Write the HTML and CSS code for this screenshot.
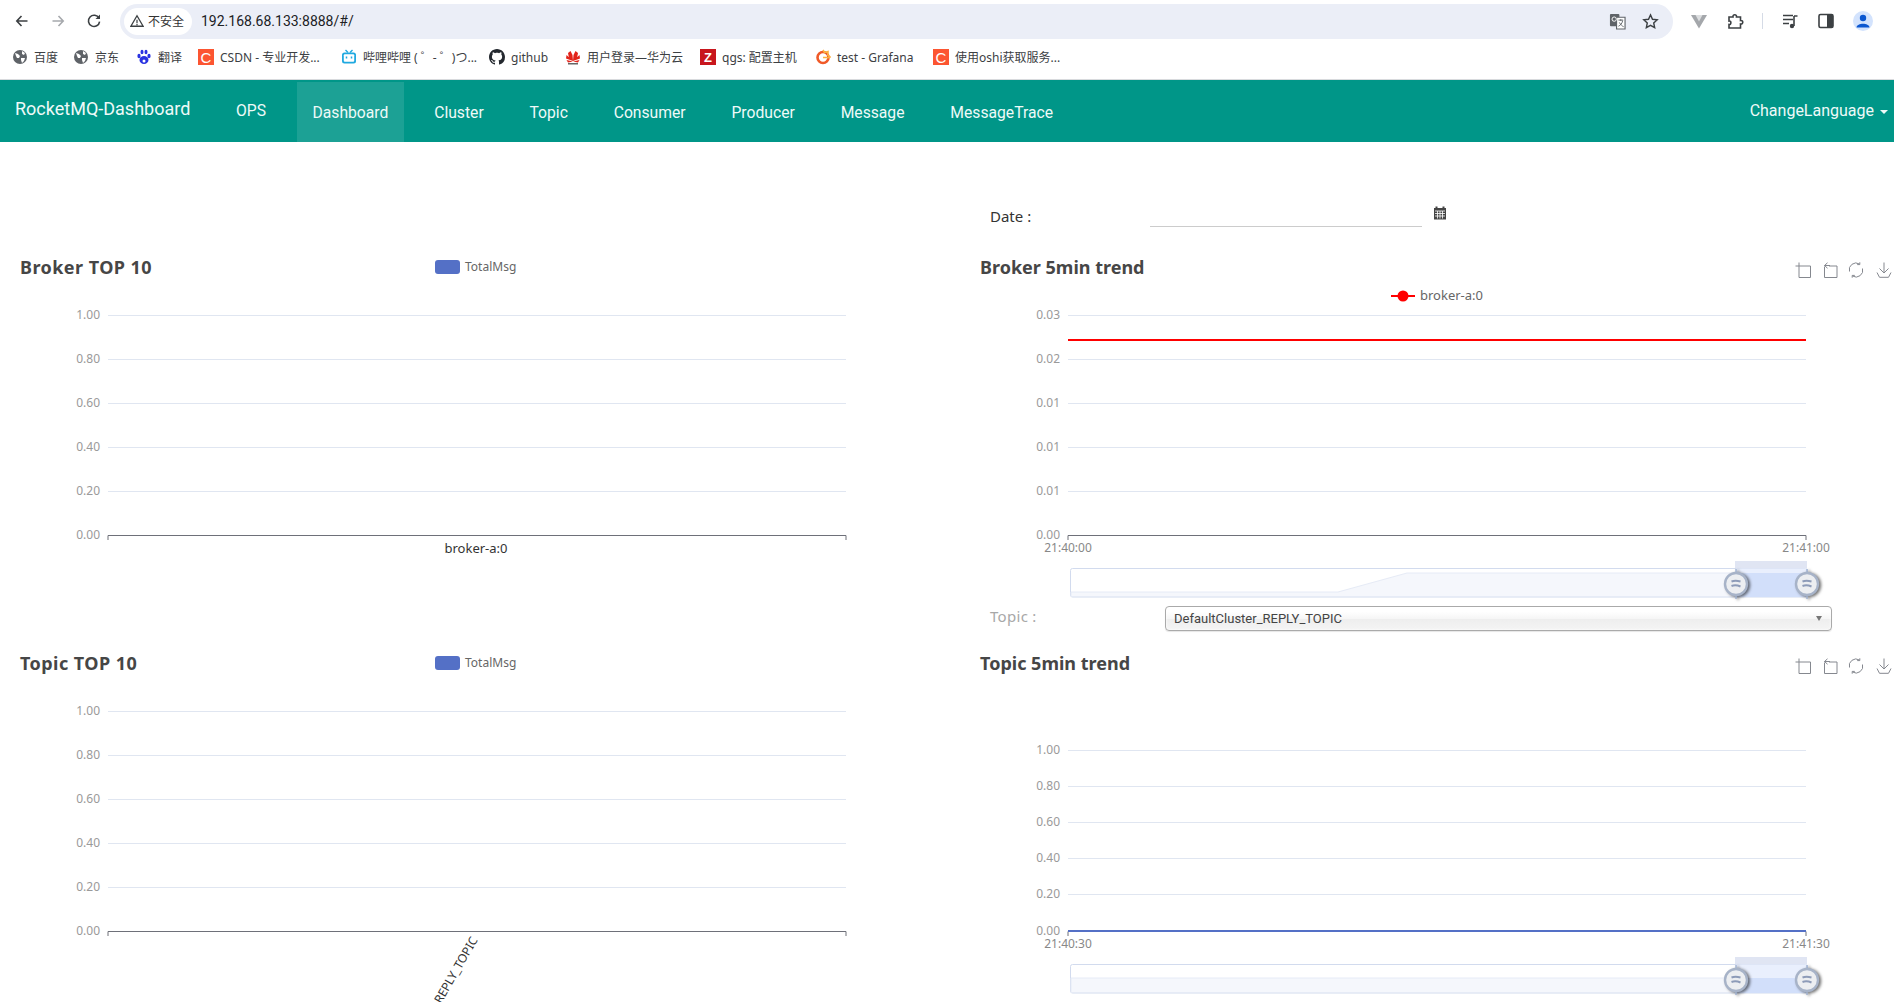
FILE: index.html
```html
<!DOCTYPE html>
<html lang="zh">
<head>
<meta charset="utf-8">
<title>RocketMQ-Dashboard</title>
<link rel="stylesheet" href="styles.css">
</head>
<body>
<svg class="defs" width="0" height="0" aria-hidden="true">
  <defs>
    <symbol id="globe" viewBox="0 0 16 16"><circle cx="8" cy="8" r="7" fill="#5f6368"/><path d="M3 4l3 1 2 2-1 2-2 0-1-2zM10 2l3 2-1 2-2-1zM9 9l4 0-1 3-2 2-1-3z" fill="#fff"/></symbol>
    <symbol id="tb-zoom" viewBox="0 0 16 16"><path d="M4 0.500V15.500H15.500V4H0.500" fill="none" stroke="#85888f" stroke-width="1"/></symbol>
    <symbol id="tb-back" viewBox="0 0 16 16"><path d="M7 4H15V15.500H2.500V4.500M2.500 3.500H8M5.500 0.800L2.500 3.500L5.500 6.200" fill="none" stroke="#85888f" stroke-width="1"/></symbol>
    <symbol id="tb-refresh" viewBox="0 0 16 16"><path d="M1.500 9.500A6.700 6.700 0 0 1 11.500 2M14.500 6.500A6.700 6.700 0 0 1 4.500 14M11.800 0.300V2.600H9.200M4.200 15.700V13.400H6.800" fill="none" stroke="#85888f" stroke-width="1"/></symbol>
    <symbol id="tb-save" viewBox="0 0 16 16"><path d="M8 0.500V10.500M3.500 6.500L8 11L12.500 6.500M1 10.500L3.500 15.300H12.500L15 10.500" fill="none" stroke="#85888f" stroke-width="1"/></symbol>
    <symbol id="handle" viewBox="0 0 26 30" overflow="visible"><path d="M13 0V4M13 26V30" stroke="#9db0d0" stroke-width="1.400"/><circle cx="13" cy="15" r="11" fill="#eceef1" stroke="#a7b3c8" stroke-width="2.400"/><path d="M8.500 12.500C11 11.500 14 11.500 17.500 12.500M8.500 17C11 16 14 16 17.500 17.500" fill="none" stroke="#8d9bb8" stroke-width="2"/></symbol>
  </defs>
</svg>

<header class="chrome">
  <div class="toolbar">
    <svg class="tool-ic" viewBox="0 0 16 16"><path d="M13.500 8H3M7.500 3L2.800 8l4.700 5" fill="none" stroke="#3c4043" stroke-width="1.600"/></svg>
    <svg class="tool-ic" viewBox="0 0 16 16"><path d="M2.500 8H13M8.500 3l4.700 5-4.700 5" fill="none" stroke="#a6a9ad" stroke-width="1.600"/></svg>
    <svg class="tool-ic" viewBox="0 0 16 16"><path d="M13 5.200A5.600 5.600 0 1 0 13.600 8.600" fill="none" stroke="#3c4043" stroke-width="1.600"/><path d="M14 1.500V6H9.500z" fill="#3c4043"/></svg>
    <div class="omnibox">
      <div class="secure">
        <svg class="warn" viewBox="0 0 16 16"><path d="M8 2L15 14H1z" fill="none" stroke="#3c4043" stroke-width="1.500"/><path d="M8 6.500V10.500M8 11.500V13" stroke="#3c4043" stroke-width="1.400"/></svg>
        <span>不安全</span>
      </div>
      <span class="url">192.168.68.133:8888/#/</span>
      <svg class="omni-ic translate" viewBox="0 0 18 18"><rect x="1" y="1" width="10" height="13" rx="1" fill="#5f6368"/><path d="M8 4.500H17V17H8z" fill="#fff" stroke="#5f6368" stroke-width="1.200"/><path d="M10 7.500H15M12.500 6.500V8.500M14.500 8C14 11 12 13 10 14M11 10C12 12 14 14 15.500 14.500" fill="none" stroke="#5f6368"/><circle cx="5.500" cy="6.500" r="2.300" fill="none" stroke="#fff"/></svg>
      <svg class="omni-ic" viewBox="0 0 18 18"><path d="M9 2l2.100 4.600 5 .6-3.700 3.400 1 5L9 13.100l-4.400 2.500 1-5L1.900 7.200l5-.6z" fill="none" stroke="#3c4043" stroke-width="1.500"/></svg>
    </div>
    <div class="ext">
      <svg class="ext-ic" viewBox="0 0 18 18"><path d="M1 3H17L9 16.500z" fill="#a4a7ab"/><path d="M5.500 3H12.500L9 9.500z" fill="#dcdee0"/></svg>
      <svg class="ext-ic" viewBox="0 0 18 18"><path d="M3 5H7C6.500 2 11 2 10.500 5H14.500V8.500C17.500 8 17.500 12.500 14.500 12V16H3V12.500C5.500 13 5.500 8.500 3 9z" fill="none" stroke="#3c4043" stroke-width="1.600"/></svg>
      <span class="ext-sep"></span>
      <svg class="ext-ic" viewBox="0 0 18 18"><path d="M2 3.500H12M2 7.500H12M2 11.500H8" stroke="#3c4043" stroke-width="1.600"/><path d="M13 4V14M13 4H16.500" fill="none" stroke="#3c4043" stroke-width="1.600"/><circle cx="11" cy="14" r="2.200" fill="#3c4043"/></svg>
      <svg class="ext-ic" viewBox="0 0 18 18"><rect x="2" y="2.500" width="14" height="13" rx="1.500" fill="#fff" stroke="#3c4043" stroke-width="1.600"/><rect x="10" y="2.500" width="6" height="13" fill="#3c4043"/></svg>
      <svg class="avatar" viewBox="0 0 20 20"><circle cx="10" cy="10" r="10" fill="#d3e3fd"/><circle cx="10" cy="7" r="3.200" fill="#0b57d0"/><path d="M3.500 16.500C4 11.500 16 11.500 16.500 16.500z" fill="#0b57d0"/></svg>
    </div>
  </div>
  <nav class="bookmarks">
    <a class="bm bm-1"><svg class="bm-ic"><use href="#globe"/></svg>百度</a>
    <a class="bm bm-2"><svg class="bm-ic"><use href="#globe"/></svg>京东</a>
    <a class="bm bm-3"><svg class="bm-ic" viewBox="0 0 16 16"><ellipse cx="8" cy="11" rx="4.500" ry="4" fill="#2932e1"/><ellipse cx="3" cy="7" rx="1.600" ry="2.200" fill="#2932e1"/><ellipse cx="13" cy="7" rx="1.600" ry="2.200" fill="#2932e1"/><ellipse cx="6" cy="3" rx="1.500" ry="2.200" fill="#2932e1"/><ellipse cx="10" cy="3" rx="1.500" ry="2.200" fill="#2932e1"/><circle cx="8" cy="12" r="1.500" fill="#fff"/></svg>翻译</a>
    <a class="bm bm-4"><span class="bm-c">C</span>CSDN - 专业开发...</a>
    <a class="bm bm-5"><svg class="bm-ic" viewBox="0 0 16 16"><path d="M4.500 1L7 3.500M11.500 1L9 3.500" stroke="#20a9e0" stroke-width="1.400"/><rect x="1" y="3.500" width="14" height="11" rx="2.500" fill="#20a9e0"/><rect x="2.800" y="5.300" width="10.400" height="7.400" rx="1" fill="#fff"/><path d="M5.500 7.500V9.500M10.500 7.500V9.500" stroke="#20a9e0" stroke-width="1.500"/></svg>哔哩哔哩 ( ゜- ゜)つ...</a>
    <a class="bm bm-6"><svg class="bm-ic" viewBox="0 0 16 16"><path fill="#24292f" d="M8 0C3.580 0 0 3.580 0 8c0 3.540 2.290 6.530 5.470 7.590.4.070.55-.17.55-.38 0-.19-.01-.82-.01-1.490-2.010.37-2.530-.49-2.690-.94-.09-.23-.48-.94-.82-1.130-.28-.15-.68-.52-.01-.53.63-.01 1.080.58 1.230.82.72 1.210 1.870.87 2.330.66.07-.52.28-.87.51-1.070-1.780-.2-3.640-.89-3.640-3.950 0-.87.310-1.590.820-2.150-.080-.2-.36-1.020.08-2.120 0 0 .67-.21 2.200.82.640-.18 1.320-.27 2-.27s1.360.09 2 .27c1.530-1.040 2.200-.82 2.200-.82.440 1.100.160 1.920.080 2.120.510.560.820 1.270.820 2.150 0 3.070-1.870 3.750-3.650 3.950.290.250.540.730.540 1.480 0 1.070-.010 1.930-.010 2.200 0 .210.150.460.550.380A8.010 8.010 0 0 0 16 8c0-4.420-3.580-8-8-8z"/></svg>github</a>
    <a class="bm bm-7"><svg class="bm-ic" viewBox="0 0 16 16"><path d="M8 12L4 9 3 4 5.500 2 7.500 6zM8 12l4-3 1-5-2.500-2L8.500 6zM8 12L1 9.500 1.500 6zM8 12l7-2.500L14.500 6zM8 12.500L3 13.500 1.500 11zM8 12.500l5 1 1.500-2.500z" fill="#e2231a"/><rect x="3" y="14" width="10" height="1.500" fill="#666"/></svg>用户登录—华为云</a>
    <a class="bm bm-8"><span class="bm-z">Z</span>qgs: 配置主机</a>
    <a class="bm bm-9"><svg class="bm-ic" viewBox="0 0 16 16"><circle cx="8" cy="8.500" r="5.500" fill="none" stroke="#f05a28" stroke-width="2.600"/><path d="M8 1L9.500 3.500 13 2.500 12.800 6 15 8 12 9M8 8.500h4" fill="none" stroke="#fbb040" stroke-width="1.600"/></svg>test - Grafana</a>
    <a class="bm bm-10"><span class="bm-c">C</span>使用oshi获取服务...</a>
  </nav>
</header>

<nav class="appbar">
  <a class="brand">RocketMQ-Dashboard</a>
  <a class="ops">OPS</a>
  <ul class="menu">
    <li class="item active">Dashboard</li>
    <li class="item">Cluster</li>
    <li class="item">Topic</li>
    <li class="item">Consumer</li>
    <li class="item">Producer</li>
    <li class="item">Message</li>
    <li class="item">MessageTrace</li>
  </ul>
  <a class="lang">ChangeLanguage<span class="caret"></span></a>
</nav>

<main class="board">
  <section class="col-left">
    <svg class="chart chart-tall" viewBox="0 0 960 396">
      <text class="title title-wide" x="20" y="34">Broker TOP 10</text>
      <rect class="legend-bar" x="435" y="20" width="25" height="14" rx="3"/>
      <text class="legend" x="465" y="31">TotalMsg</text>
      <path class="grid" d="M108 75.500H846M108 119.500H846M108 163.500H846M108 207.500H846M108 251.500H846"/>
      <path class="axis" d="M108 300V295.500H846V300"/>
      <g class="ylab"><text x="100" y="79">1.00</text><text x="100" y="123">0.80</text><text x="100" y="167">0.60</text><text x="100" y="211">0.40</text><text x="100" y="255">0.20</text><text x="100" y="299">0.00</text></g>
      <text class="xcat" x="476" y="313">broker-a:0</text>
    </svg>
    <svg class="chart chart-tall" viewBox="0 0 960 396">
      <text class="title title-wide" x="20" y="34">Topic TOP 10</text>
      <rect class="legend-bar" x="435" y="20" width="25" height="14" rx="3"/>
      <text class="legend" x="465" y="31">TotalMsg</text>
      <path class="grid" d="M108 75.500H846M108 119.500H846M108 163.500H846M108 207.500H846M108 251.500H846"/>
      <path class="axis" d="M108 300V295.500H846V300"/>
      <g class="ylab"><text x="100" y="79">1.00</text><text x="100" y="123">0.80</text><text x="100" y="167">0.60</text><text x="100" y="211">0.40</text><text x="100" y="255">0.20</text><text x="100" y="299">0.00</text></g>
      <text class="xrot" transform="translate(478 304) rotate(-60)">DefaultCluster_REPLY_TOPIC</text>
    </svg>
  </section>

  <section class="col-right">
    <div class="date-row">
      <label class="date-label">Date :</label>
      <div class="date-input"></div>
      <svg class="cal" viewBox="0 0 14 14"><path d="M1 2H13V13.500H1z" fill="#444"/><path d="M3.500 0.500V3M10.500 0.500V3" stroke="#444" stroke-width="2"/><path d="M2 5H12M2 7.500H12M2 10H12M4.500 5V12.500M7 5V12.500M9.500 5V12.500" stroke="#fff" stroke-width=".8"/></svg>
    </div>
    <svg class="chart chart-a" viewBox="0 0 934 360">
      <text class="title" x="20" y="34">Broker 5min trend</text>
      <use href="#tb-zoom" x="835" y="22" width="16" height="16"/>
      <use href="#tb-back" x="862" y="22" width="16" height="16"/>
      <use href="#tb-refresh" x="888" y="22" width="16" height="16"/>
      <use href="#tb-save" x="916" y="22" width="16" height="16"/>
      <path class="red" d="M431 56H455"/><circle class="red-dot" cx="443" cy="56" r="5.500"/>
      <text class="legend legend-lg" x="460" y="60">broker-a:0</text>
      <path class="grid" d="M108 75.500H846M108 119.500H846M108 163.500H846M108 207.500H846M108 251.500H846"/>
      <path class="red" d="M108 100H846"/>
      <path class="axis" d="M108 300V295.500H846V300"/>
      <g class="ylab"><text x="100" y="79">0.03</text><text x="100" y="123">0.02</text><text x="100" y="167">0.01</text><text x="100" y="211">0.01</text><text x="100" y="255">0.01</text><text x="100" y="299">0.00</text></g>
      <g class="xtime"><text x="108" y="312">21:40:00</text><text x="846" y="312">21:41:00</text></g>
      <rect class="dz-frame" x="110.500" y="328.500" width="737" height="28.500" rx="2"/>
      <path class="dz-area" d="M111 352H378L447 333H847V356.500H111z"/>
      <rect class="dz-tab" x="775" y="321" width="72" height="7"/>
      <rect class="dz-top" x="776" y="328.500" width="71" height="4.500"/>
      <rect class="dz-sel" x="776" y="333" width="71" height="24"/>
      <use href="#handle" x="763" y="329" width="26" height="30" class="dz-handle"/>
      <use href="#handle" x="834" y="329" width="26" height="30" class="dz-handle"/>
    </svg>
    <div class="topic-row">
      <label class="topic-label">Topic :</label>
      <div class="select"><span>DefaultCluster_REPLY_TOPIC</span><i class="select-arrow"></i></div>
    </div>
    <svg class="chart chart-b" viewBox="0 0 934 366">
      <text class="title" x="20" y="34">Topic 5min trend</text>
      <use href="#tb-zoom" x="835" y="22" width="16" height="16"/>
      <use href="#tb-back" x="862" y="22" width="16" height="16"/>
      <use href="#tb-refresh" x="888" y="22" width="16" height="16"/>
      <use href="#tb-save" x="916" y="22" width="16" height="16"/>
      <path class="grid" d="M108 114.500H846M108 150.500H846M108 186.500H846M108 222.500H846M108 258.500H846"/>
      <path class="axis" d="M108 300V295.500H846V300"/>
      <path class="blue" d="M108 295H846"/>
      <g class="ylab"><text x="100" y="118">1.00</text><text x="100" y="154">0.80</text><text x="100" y="190">0.60</text><text x="100" y="226">0.40</text><text x="100" y="262">0.20</text><text x="100" y="299">0.00</text></g>
      <g class="xtime"><text x="108" y="312">21:40:30</text><text x="846" y="312">21:41:30</text></g>
      <rect class="dz-frame" x="110.500" y="328.500" width="737" height="28.500" rx="2"/>
      <path class="dz-area" d="M111 342H847V356.500H111z"/>
      <rect class="dz-tab" x="775" y="321" width="72" height="7"/>
      <rect class="dz-top" x="776" y="328.500" width="71" height="13.500"/>
      <rect class="dz-sel" x="776" y="342" width="71" height="15"/>
      <use href="#handle" x="763" y="329" width="26" height="30" class="dz-handle"/>
      <use href="#handle" x="834" y="329" width="26" height="30" class="dz-handle"/>
    </svg>
  </section>
</main>
</body>
</html>
```

FILE: styles.css
```css
html, body { margin: 0; padding: 0; height: 1002px; overflow: hidden; background: #fff; }
body { font-family: "Noto Sans", "Noto Sans CJK SC", sans-serif; color: #333; width: 1894px; }
.defs { position: absolute; }

/* browser chrome */
.chrome { height: 79px; box-sizing: border-box; display: flex; flex-direction: column; }
.toolbar { height: 42px; display: flex; align-items: center; padding: 0 0 0 14px; box-sizing: border-box; flex: none; }
.tool-ic { width: 16px; height: 16px; margin-right: 20px; flex: none; }
.omnibox { width: 1553px; height: 35px; margin-left: -2px; background: #ebeef7; border-radius: 18px; display: flex; align-items: center; flex: none; box-sizing: border-box; padding: 0 14px 0 4px; }
.secure { display: flex; align-items: center; gap: 4px; height: 27px; padding: 0 4px 0 6px; background: #fff; border-radius: 14px; font-size: 12px; color: #333; width: 68px; box-sizing: border-box; flex: none; }
.warn { width: 14px; height: 14px; flex: none; }
.url { margin-left: 9px; font-family: "Roboto", sans-serif; font-size: 14px; color: #202124; flex: 1; }
.omni-ic { width: 17px; height: 17px; flex: none; margin-left: 16px; }
.ext { display: flex; align-items: center; margin-left: 17px; }
.ext-ic { width: 18px; height: 18px; flex: none; margin-right: 18px; }
.ext-sep { width: 1px; height: 16px; background: #d5dbe6; margin: 0 18px 0 0; }
.avatar { width: 20px; height: 20px; flex: none; }

.bookmarks { height: 30px; flex: none; display: flex; align-items: center; font-size: 12px; color: #3c4043; font-family: "Noto Sans", "Noto Sans CJK SC", sans-serif; }
.bm { display: flex; align-items: center; gap: 6px; flex: none; white-space: nowrap; box-sizing: border-box; }
.bm-1 { margin-left: 12px; width: 61px; }
.bm-2 { width: 63px; }
.bm-3 { width: 62px; }
.bm-4 { width: 143px; }
.bm-5 { width: 148px; }
.bm-6 { width: 76px; }
.bm-7 { width: 135px; }
.bm-8 { width: 115px; }
.bm-9 { width: 118px; }
.bm-ic { width: 16px; height: 16px; flex: none; }
.bm-c, .bm-z { width: 16px; height: 16px; flex: none; display: flex; align-items: center; justify-content: center; color: #fff; }
.bm-c { background: #fc5531; font-size: 15px; font-family: "Liberation Sans", sans-serif; }
.bm-z { background: #c8161d; font-weight: 700; font-size: 13px; font-family: "Liberation Sans", sans-serif; }

/* app bar */
.appbar { height: 63px; background: #009688; border-top: 1px solid #d8dadd; box-sizing: border-box; display: flex; color: #fff; font-family: "Roboto", sans-serif; font-size: 15.700px; }
.brand { font-size: 18px; padding: 17px 0 0 15px; width: 181px; flex: none; white-space: nowrap; line-height: 24px; color: #eefaf8; }
.ops { padding: 20px 0 0 0; margin-left: 40px; line-height: 22px; flex: none; color: #eefaf8; width: 61px; }
.menu { list-style: none; margin: 2px 0 0 0; padding: 0; display: flex; gap: 14.800px; flex: none; }
.item { padding: 0 15.500px; height: 60px; line-height: 62px; color: #eefaf8; }
.item.active { background: rgba(255, 255, 255, .11); }
.lang { margin-left: auto; padding: 20px 6px 0 0; line-height: 22px; font-size: 16px; white-space: nowrap; color: #eefaf8; }
.caret { display: inline-block; border: 4px solid transparent; border-top-color: #eefaf8; border-bottom: 0; margin-left: 6px; vertical-align: middle; }

/* board */
.board { display: flex; align-items: flex-start; }
.col-left { width: 960px; padding-top: 98px; flex: none; }
.col-right { width: 934px; flex: none; }
.chart { display: block; overflow: visible; }
.chart-tall { width: 960px; height: 396px; }
.chart-a { width: 934px; height: 360px; }
.chart-b { width: 934px; height: 366px; }

.date-row { height: 98px; display: flex; align-items: flex-start; box-sizing: border-box; padding: 63px 0 0 30px; }
.date-label { font-size: 15px; width: 160px; line-height: 22px; color: #333; flex: none; }
.date-input { width: 272px; height: 21px; border-bottom: 1px solid #ccc; flex: none; }
.cal { width: 14px; height: 14px; margin: 1px 0 0 11px; flex: none; }

.topic-row { height: 36px; display: flex; align-items: flex-start; padding: 6px 0 0 30px; box-sizing: border-box; }
.topic-label { width: 175px; font-size: 15px; color: #a8a8a8; line-height: 20px; flex: none; letter-spacing: .3px; }
.select { width: 667px; height: 25px; box-sizing: border-box; border: 1px solid #aaa; border-radius: 4px; background: linear-gradient(#fff 20%, #f6f6f6 50%, #eee 52%, #f4f4f4 100%); box-shadow: 0 0 3px #fff inset, 0 1px 1px rgba(0, 0, 0, .1); display: flex; align-items: center; justify-content: space-between; padding: 0 9px 0 8px; font-family: "Roboto", sans-serif; font-size: 13px; color: #444; flex: none; }
.select-arrow { border: 3.500px solid transparent; border-top: 5px solid #777; border-bottom: 0; }

/* chart svg */
.title { font-family: "Noto Sans", sans-serif; font-size: 18px; font-weight: 700; fill: #464646; }
.title-wide { letter-spacing: .45px; }
.legend { font-family: "Noto Sans", sans-serif; font-size: 12px; fill: #666; }
.legend-lg { font-size: 13px; }
.legend-bar { fill: #5470c6; }
.grid { fill: none; stroke: #e0e6f1; stroke-width: 1; }
.axis { fill: none; stroke: #6e7079; stroke-width: 1; }
.ylab text { font-family: "Noto Sans", sans-serif; font-size: 12px; fill: #9a9a9a; text-anchor: end; }
.xcat { font-family: "Noto Sans", sans-serif; font-size: 13px; fill: #333; text-anchor: middle; }
.xrot { font-family: "Noto Sans", sans-serif; font-size: 12px; fill: #333; text-anchor: end; }
.xtime text { font-family: "Noto Sans", sans-serif; font-size: 12px; fill: #888; text-anchor: middle; }
.red { fill: none; stroke: #f00; stroke-width: 2; }
.red-dot { fill: #f00; }
.blue { fill: none; stroke: #5470c6; stroke-width: 2; }
.dz-frame { fill: #fff; stroke: #d2dbee; stroke-width: 1; }
.dz-area { fill: #f5f7fc; stroke: #e6ebf6; stroke-width: 1; }
.dz-tab { fill: #e0e5f3; }
.dz-top { fill: #e9effd; }
.dz-sel { fill: #d2dffa; }
.dz-handle { filter: drop-shadow(2px 1px 1.500px rgba(0, 0, 0, .55)); }
```
